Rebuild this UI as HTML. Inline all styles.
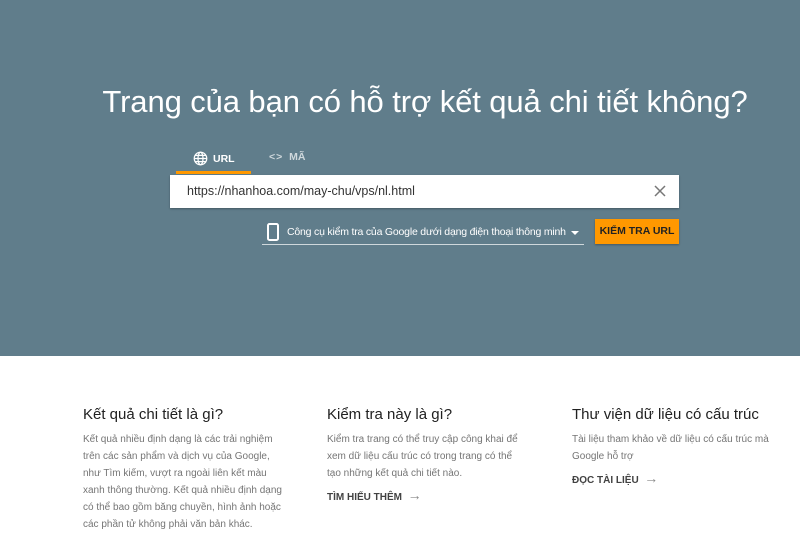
<!DOCTYPE html>
<html><head><meta charset="utf-8"><style>
*{margin:0;padding:0;box-sizing:border-box}
body{width:800px;height:548px;overflow:hidden;font-family:"Liberation Sans",sans-serif;background:#fff;position:relative}
.top{position:absolute;left:0;top:0;width:800px;height:356px;background:#607d8b}
h1{position:absolute;left:0;width:850px;top:84px;text-align:center;color:#fff;font-weight:normal;font-size:31px;letter-spacing:-0.1px;white-space:nowrap}
.tab{position:absolute;top:151px;color:#fff;font-size:10.5px;font-weight:bold}
.ul{position:absolute;left:176px;top:171px;width:75px;height:3px;background:#ff9800}
.input{position:absolute;left:170px;top:175px;width:509px;height:33px;background:#fff;box-shadow:0 1px 2px rgba(0,0,0,.3);font-size:12.5px;color:#333;padding:9px 0 0 17px}
.x{position:absolute;right:11px;top:8px}
.sel{position:absolute;left:262px;top:221px;width:322px;height:24px;border-bottom:1px solid #cfd8dc;color:#fff;font-size:10.5px;white-space:nowrap}
.btn{position:absolute;left:595px;top:219px;width:84px;height:25px;background:#ff9800;color:#222;font-size:10.5px;font-weight:bold;text-align:center;line-height:25px;box-shadow:0 1px 2px rgba(0,0,0,.3);white-space:nowrap}
.col{position:absolute;top:406px;width:205px}
.col h2{font-size:15px;font-weight:normal;color:#212121;margin-bottom:8px}
.col p{font-size:10px;line-height:17px;color:#757575}
.col a{display:block;margin-top:5px;font-size:10px;font-weight:bold;color:#424242}
</style></head><body>
<div class="top"></div>
<h1>Trang của bạn có hỗ trợ kết quả chi tiết không?</h1>
<div class="tab" style="left:193px">
<svg width="15" height="15" viewBox="0 0 24 24" style="vertical-align:-4px;margin-right:5px"><circle cx="12" cy="12" r="10" fill="none" stroke="#fff" stroke-width="2"/><ellipse cx="12" cy="12" rx="4" ry="10" fill="none" stroke="#fff" stroke-width="2"/><path d="M2 12h20M4 7h16M4 17h16" stroke="#fff" stroke-width="2"/></svg>URL</div>
<div class="tab" style="left:269px;color:#cfd8dc"><span style="letter-spacing:1px">&lt;&gt;</span>&nbsp; MÃ</div>
<div class="ul"></div>
<div class="input">https://nhanhoa.com/may-chu/vps/nl.html
<svg class="x" width="16" height="16" viewBox="0 0 16 16"><path d="M3 3L13 13M13 3L3 13" stroke="#777" stroke-width="1.5"/></svg></div>
<div class="sel">
<svg width="12" height="18" viewBox="0 0 12 18" style="position:absolute;left:5px;top:2px"><rect x="1" y="1" width="10" height="16" rx="1.5" fill="none" stroke="#fff" stroke-width="2"/></svg>
<span style="position:absolute;left:25px;top:5px;letter-spacing:-0.2px">Công cụ kiểm tra của Google dưới dạng điện thoại thông minh</span>
<span style="position:absolute;left:309px;top:10px;border:4px solid transparent;border-top:4px solid #fff"></span>
</div>
<div class="btn">KIỂM TRA URL</div>
<div class="col" style="left:83px"><h2>Kết quả chi tiết là gì?</h2><p>Kết quả nhiều định dạng là các trải nghiệm trên các sản phẩm và dịch vụ của Google, như Tìm kiếm, vượt ra ngoài liên kết màu xanh thông thường. Kết quả nhiều định dạng có thể bao gồm băng chuyền, hình ảnh hoặc các phần tử không phải văn bản khác.</p></div>
<div class="col" style="left:327px;width:200px"><h2>Kiểm tra này là gì?</h2><p>Kiểm tra trang có thể truy cập công khai để xem dữ liệu cấu trúc có trong trang có thể tạo những kết quả chi tiết nào.</p><a>TÌM HIỂU THÊM &nbsp;<span style="font-weight:normal;color:#888;font-size:14px">→</span></a></div>
<div class="col" style="left:572px;width:210px"><h2>Thư viện dữ liệu có cấu trúc</h2><p>Tài liệu tham khảo về dữ liệu có cấu trúc mà Google hỗ trợ</p><a>ĐỌC TÀI LIỆU &nbsp;<span style="font-weight:normal;color:#888;font-size:14px">→</span></a></div>
</body></html>
